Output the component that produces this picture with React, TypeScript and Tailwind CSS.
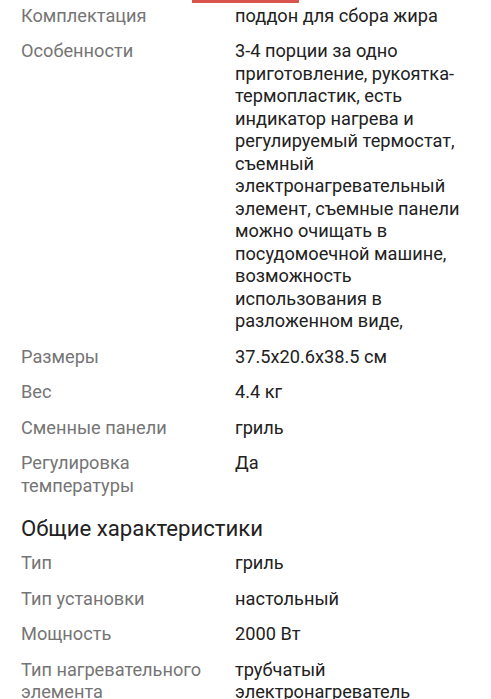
const ROWS_TOP: [string, string][] = [
  ["Комплектация", "поддон для сбора жира"],
  [
    "Особенности",
    "3-4 порции за одно приготовление, рукоятка-термопластик, есть индикатор нагрева и регулируемый термостат, съемный электронагревательный элемент, съемные панели можно очищать в посудомоечной машине, возможность использования в разложенном виде,",
  ],
  ["Размеры", "37.5x20.6x38.5 см"],
  ["Вес", "4.4 кг"],
  ["Сменные панели", "гриль"],
  ["Регулировка температуры", "Да"],
];

const ROWS_GENERAL: [string, string][] = [
  ["Тип", "гриль"],
  ["Тип установки", "настольный"],
  ["Мощность", "2000 Вт"],
  ["Тип нагревательного элемента", "трубчатый электронагреватель"],
];

function SpecRow({ label, value }: { label: string; value: string }) {
  return (
    <div className="grid grid-cols-[214px_1fr] py-[6.5px] text-[18.2px] leading-[22.5px]">
      <div className="pr-2 text-[#757575]">{label}</div>
      <div className="pr-4 text-[#212121]">{value}</div>
    </div>
  );
}

export default function App() {
  return (
    <div className="h-[699px] overflow-hidden bg-white font-['Roboto','Noto_Sans',sans-serif]">
      <div className="relative pl-[21px]">
        <div className="absolute left-[192px] top-[2px] h-[3px] w-[107px] bg-[#d9544d]" />
        <div className="-mt-[2px]">
          {ROWS_TOP.map(([label, value]) => (
            <SpecRow key={label} label={label} value={value} />
          ))}
        </div>
        <h2 className="pt-[11px] pb-[5px] text-[22.2px] leading-[26px] text-[#212121]">
          Общие характеристики
        </h2>
        {ROWS_GENERAL.map(([label, value]) => (
          <SpecRow key={label} label={label} value={value} />
        ))}
      </div>
    </div>
  );
}
